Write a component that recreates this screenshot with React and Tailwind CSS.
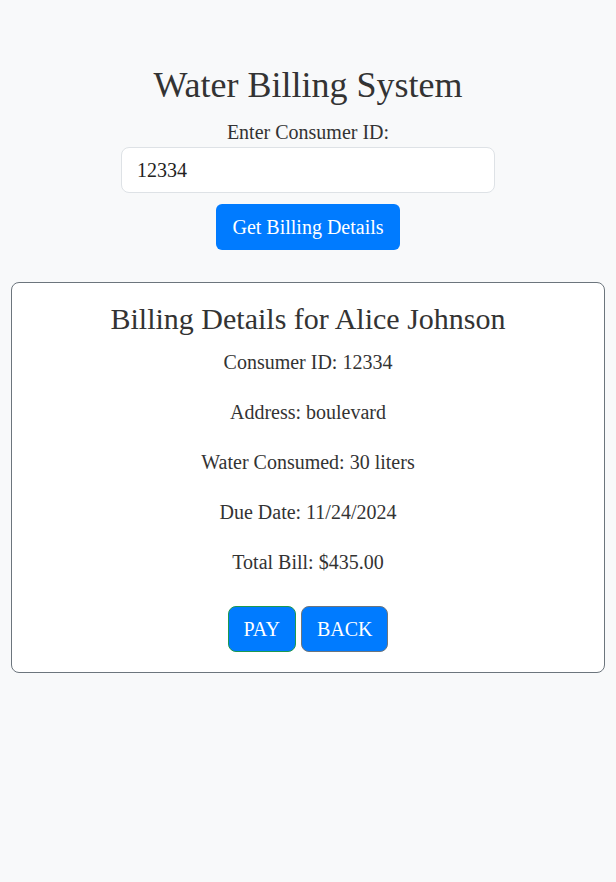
export default function App() {
  const rows = [
    "Consumer ID: 12334",
    "Address: boulevard",
    "Water Consumed: 30 liters",
    "Due Date: 11/24/2024",
    "Total Bill: $435.00",
  ];
  return (
    <div
      className="min-h-[882px] w-full bg-[#f8f9fa] text-[#333] px-[11px] pt-[63px]"
      style={{ fontFamily: '"Liberation Serif", "Times New Roman", serif' }}
    >
      <div className="flex flex-col items-center">
        <h1 className="text-[36px] leading-[44px] font-normal">Water Billing System</h1>
        <label className="mt-[10px] text-[20px] leading-[30px]">Enter Consumer ID:</label>
        <div className="mt-[0px] w-[374px] h-[46px] bg-white border border-[#dee2e6] rounded-lg px-[15px] flex items-center text-[20px] text-[#222]">
          12334
        </div>
        <button className="mt-[11px] bg-[#007bff] text-white text-[20px] leading-[30px] px-[16px] py-[8px] rounded-[6px]">
          Get Billing Details
        </button>
      </div>

      <div className="mt-[32px] bg-white border border-[#6c757d] rounded-lg pt-[18px] pb-[20px] flex flex-col items-center">
        <h2 className="text-[30px] leading-[36px] font-normal">Billing Details for Alice Johnson</h2>
        <div className="mt-[10px] flex flex-col items-center gap-[20px]">
          {rows.map((r) => (
            <p key={r} className="text-[20px] leading-[30px]">{r}</p>
          ))}
        </div>
        <div className="mt-[29px] flex gap-[5px]">
          <button className="bg-[#007bff] text-white text-[20px] leading-[30px] px-[15px] py-[7px] rounded-lg border border-[#1e9a4f]">
            PAY
          </button>
          <button className="bg-[#007bff] text-white text-[20px] leading-[30px] px-[15px] py-[7px] rounded-lg border border-[#6c757d]">
            BACK
          </button>
        </div>
      </div>
    </div>
  );
}
